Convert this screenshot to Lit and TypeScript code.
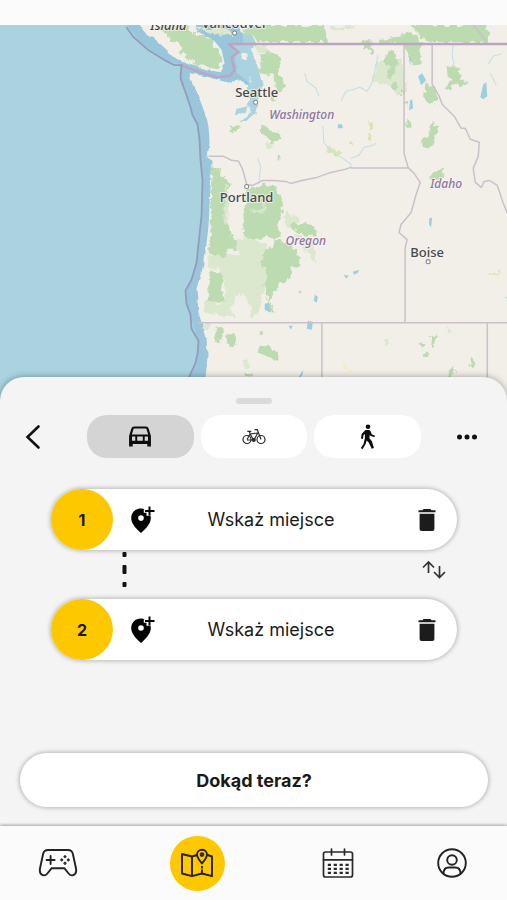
import { LitElement, html, svg, css } from "lit";
import { customElement, property, state } from "lit/decorators.js";

const forests = [
  "M157 28 162 25 186 25 194 33 207 38 215 45 221 58 220 69 207 67 194 62 180 53 182 47 172 40Z",
  "M240 31 258 25 324 25 326 42 256 42 252 36Z",
  "M410 25 486 25 487 42 432 42 420 37Z",
  "M258 55 266 52 277 53 280 64 277 73 284 83 280 92 275 88 274 76 264 74 256 72 262 64Z",
  "M376 39 404 36 406 33 415 35 421 44 418 50 422 66 415 67 408 60 407 53 400 43 378 43Z",
  "M362 40 369 39 371 50 362 49Z", "M386 52 392 50 396 55 395 70 390 80 386 76 388 69 384 64Z",
  "M445 66 459 67 461 80 467 82 459 86 452 84 449 91 443 90 450 82Z",
  "M424 84 433 87 436 92 436 100 430 103 423 99Z",
  "M430 123 437 126 434 139 432 147 422 147 419 138 428 136Z",
  "M430 172 442 169 443 177 433 180 428 177Z",
  "M260 124 267 126 270 131 278 133 280 140 271 144 266 137 259 131Z",
  "M229 126 237 125 236 132 231 133Z",
  "M211 166 218 166 221 175 229 181 228 198 226 214 230 235 236 240 236 250 228 247 225 257 214 254 207 252 210 228Z",
  "M246 190 262 184 276 186 281 198 281 215 277 225 280 235 274 240 265 234 261 239 245 237 242 223 244 208Z",
  "M276 240 290 243 299 257 298 265 291 267 290 276 276 286 269 302 275 311 269 310 264 285 266 268 260 262 265 250Z",
  "M291 222 298 224 304 222 316 229 315 236 304 235 294 232Z",
  "M209 270 221 271 221 289 224 302 207 302Z",
  "M217 325 222 329 218 342 214 342Z", "M227 334 234 335 237 344 230 347 225 342Z",
  "M260 346 267 344 269 349 276 351 277 358 268 356 259 353Z",
  "M417 342 420 341 424 345 421 347Z", "M430 347 431 335 435 333 434 343 433 349Z",
  "M470 355 473 357 473 368 469 366Z", "M446 377 447 369 453 365 454 372Z",
];

const scrub = [
  "M208 256 226 252 240 256 250 264 260 270 263 288 260 310 250 318 250 302 242 292 233 296 230 310 236 318 218 315 204 312 204 300 220 304 225 290 220 268 208 268Z",
  "M228 240 246 236 268 244 262 262 244 260Z", "M240 262 264 250 266 285 258 290Z",
  "M284 210 300 220 292 228 284 226Z", "M292 234 308 238 316 250 314 262 304 248Z",
  "M376 62 384 58 400 58 406 90 396 96 392 84 372 82Z",
];

const lakes = [
  "M417 76 421 73 425 80 420 85 418 79Z", "M482 84 485 82 486 96 482 99 479 97Z",
  "M337 124 341 124 342 128 337 128Z", "M428 218 431 217 430 227 428 224Z",
  "M307 320 312 321 311 329 306 328Z", "M314 294 317 296 316 302 313 300Z",
  "M264 303 268 302 270 312 264 309Z", "M343 274 348 275 345 278Z", "M352 271 358 269 357 272 353 274Z",
  "M288 325 292 325 290 329Z", "M409 100 411 99 412 108 408 110Z", "M298 290 301 291 299 293Z",
  "M298 376 302 369 302 373 299 378Z", "M408 58 410 57 409 66Z", "M503 296 507 297 505 298Z",
];

const places = [
  { name: "Island", x: 168, y: 30, size: 13, kind: "region dark" },
  { name: "Vancouver", x: 234, y: 28, size: 13, kind: "city" },
  { name: "Seattle", x: 256, y: 97, size: 13, kind: "city" },
  { name: "Portland", x: 246, y: 202, size: 13, kind: "city" },
  { name: "Boise", x: 426, y: 256, size: 13, kind: "city" },
  { name: "Washington", x: 301, y: 119, size: 12, kind: "region" },
  { name: "Oregon", x: 305, y: 244, size: 12, kind: "region" },
  { name: "Idaho", x: 445, y: 188, size: 12, kind: "region" },
];

const towns = [[234, 33], [255, 102], [246, 186], [427, 261]];

@customElement("route-map")
class RouteMap extends LitElement {
  static styles = css`
    :host { display: block; position: relative; overflow: hidden; background: #aad3df; }
    svg { position: absolute; inset: 0; width: 100%; height: 100%; display: block; }
    text { font-family: "Noto Sans", "Open Sans", sans-serif; font-weight: 500; text-anchor: middle; paint-order: stroke; stroke: #f5f3efcc; stroke-width: 2px; stroke-linejoin: round; }
    .city { fill: #484848; }
    .region { fill: #8f75a2; font-style: italic; }
    .dark { fill: #444; }
    .sea { fill: #aad3df; }
    .land { fill: #f2efe9; }
    .forest { fill: #bddbb0; }
    .scrub { fill: #dbe8ce; }
    .band { fill: #9ac6dc; }
    .line { fill: none; stroke: #cbc0ca; stroke-width: 1.5; stroke-linejoin: round; }
    .country { stroke: #bda4c0; stroke-width: 2.4; }
    .coast { stroke: #939cbd; stroke-width: 1.8; }
    .river { fill: none; stroke: #c3e0e6; stroke-width: 1.1; }
    .town { fill: #fff; stroke: #888; }
  `;
  render() {
    return html`<svg viewBox="0 25 507 375" preserveAspectRatio="xMinYMin slice" role="img" aria-label="Mapa">
      <defs>
        <filter id="rough" x="-10%" y="-10%" width="120%" height="120%">
          <feTurbulence type="fractalNoise" baseFrequency="0.16" numOctaves="3" seed="4"></feTurbulence>
          <feDisplacementMap in="SourceGraphic" scale="8" xChannelSelector="R" yChannelSelector="G"></feDisplacementMap>
        </filter>
        <filter id="gentle"><feTurbulence type="fractalNoise" baseFrequency="0.12" numOctaves="2" seed="9"></feTurbulence>
          <feDisplacementMap in="SourceGraphic" scale="4" xChannelSelector="R" yChannelSelector="G"></feDisplacementMap></filter>
      </defs>
      <rect class="sea" y="25" width="507" height="375"></rect>
      <path class="band" d="M126 25 140 42 165 60 181 65 180 78 190 107 197 128 200 160 202 180 200 230 196 262 188 285 185 295 190 315 196 335 198 345 196 362 188 380 215 390 230 200 250 80 240 25Z"></path>
      <g filter="url(#gentle)">
        <path class="land" d="M136 20 145 33 160 44 175 58 190 64 205 69 219 72 224 63 221 50 213 40 198 32 193 20Z"></path>
        <path class="land" d="M236 15 240 32 252 36 256 44 250 50 254 58 258 70 262 86 257 100 246 97 249 87 240 80 226 82 205 76 189 73 192 84 198 96 204 112 208 126 209 142 207 157 211 162 210 185 208 225 204 260 196 288 198 312 206 338 207 355 202 410 520 410 520 15Z"></path>
      </g>
      <g filter="url(#rough)">
        ${scrub.map((d) => svg`<path class="scrub" d=${d}></path>`)}
        ${forests.map((d) => svg`<path class="forest" d=${d}></path>`)}
        <path class="forest" d="M270 95h4v6h-4zM390 82h5v6h-5zM400 90h4v5h-4zM403 101h4v4h-4zM405 121h4v5h-4zM253 112h3v3h-3zM275 156h4v3h-4zM258 330h4v4h-4zM245 372h7v4h-7zM423 352h4v4h-4zM368 50h3v4h-3z"></path>
        <path class="scrub" d="M384 338h4v6h-4zM446 326h4v6h-4zM243 360h4v6h-4zM204 322h6v5h-6zM224 184h3v40h-3zM250 210h14v2h-14zM262 194h2v16h-2z"></path>
        <path fill="#dce3ad" d="M326 145 333 149 341 152 338 155 327 151ZM368 122h3v8h-3zM367 133h3v7h-3zM349 141h3v3h-3zM488 273l10-2-3 3h-8z"></path>
        <path fill="#f7ecca" d="M342 362h6v7h-6z"></path>
        <path class="scrub" d="M194 28 207 33 232 36 228 28ZM330 26h22v3h-22zM250 44l14 2 6 6h-12zM264 142l10 3-6 4z"></path>
      </g>
      <path class="sea" filter="url(#gentle)" d="M234 46 244 42 250 55 250 68 256 76 258 90 253 97 258 105 252 114 247 121 240 122 247 115 250 108 241 113 234 115 236 109 246 106 250 98 246 90 247 81 236 72 235 60Z"></path>
      <path class="land" filter="url(#gentle)" d="M241 54h5v6h-5zM249 75l3 7h-3zM246 107h3v5h-3z"></path>
      ${lakes.map((d) => svg`<path fill="#9bd0df" d=${d}></path>`)}
      <path class="river" d="M304 73 306 81 315 88 318 96 M340 101 345 91 353 89 359 87 366 91 371 83 374 70 377 55 M322 126 323 142 330 151 342 158 350 164 350 168 M350 158 358 155 363 147 372 145 375 143 M452 43 451 56 453 64 M487 64 492 56 500 54 M489 73 495 85 M258 184 260 166 257 158"></path>
      <path class="line" d="M403 44V153L407 167 413 173 419 182 415 194 410 212 400 224 398 232 406 239 404 248V322M197 322H507M321 322V380M486 322V380M350 167.500H407M431 44V84L438 96 441 104 453 116 460 128 464 128 469 139 478 142 477 156 472 168 474 182 480 187 483 181 488 180 496 185 502 203 507 215M472 25 485 41"></path>
      <path class="line" d="M208 156 223 156 231 160 238 161 242 169 246 184 252 185 262 180 273 180 285 181 290 183 301 180 316 177 330 172 344 169 350 167"></path>
      <path class="line country" d="M507 44H228L238 52 231 57 234 70 229 76 216 77 199 72 181 65"></path>
      <path class="line coast" d="M126 27 133 37 148 50 164 60 174 65 181 65 180 78 186 95 190 107 192 115 197 124 199 139 200 160 202 180 201 215 196 262 191 279 185 290 186 303 190 314 191 328 198 340 197 353 195 362 187 380"></path>
      ${towns.map(([x, y]) => svg`<circle class="town" cx=${x} cy=${y} r="2"></circle>`)}
      ${places.map((p) => svg`<text class=${p.kind} x=${p.x} y=${p.y} font-size=${p.size}>${p.name}</text>`)}
    </svg>`;
  }
}

const pinPlus = html`<svg width="26" height="28" viewBox="0 0 26 28" aria-hidden="true">
  <path fill="#050505" fill-rule="evenodd" d="M15 3.200A10.200 10.200 0 0 0 11 2.400C5.200 2.400 1.200 6.600 1.200 12c0 5 3.600 9.600 9.800 15 6.200-5.400 9.800-10 9.800-15 0-.8-.1-1.500-.2-2.200H16.500V6.700H13.800V3.200ZM11 9.200a2.800 2.800 0 1 1 0 5.600 2.800 2.800 0 0 1 0-5.600Z"/>
  <path stroke="#050505" stroke-width="2" fill="none" d="M19.500 .5v9M15 5h9.500"/></svg>`;

const trash = html`<svg width="20" height="24" viewBox="0 0 20 24" aria-hidden="true">
  <path fill="#1c1c1c" d="M6.500 1h7l1 1.200h4v2h-17v-2h4zM2.600 5.800h14.800V21a2 2 0 0 1-2 2H4.600a2 2 0 0 1-2-2z"/></svg>`;

@customElement("place-field")
class PlaceField extends LitElement {
  @property({ type: Number }) number = 1;
  static styles = css`
    :host { display: grid; grid-template-columns: 62px 60px 1fr 60px; height: 61px; border-radius: 31px; background: #fff; box-shadow: 0 0 4px 1px #00000040; }
    .badge { display: grid; place-items: center; background: #fdc800; border-radius: 50%; font-size: 16px; font-weight: 700; }
    button { display: grid; place-items: center; padding: 0; border: 0; background: none; }
    input { min-width: 0; width: 100%; box-sizing: border-box; padding: 0 28px 0 0; border: 0; outline: 0; background: none; text-align: center; font: inherit; font-size: 18px; color: #1a1a1a; }
    input::placeholder { color: #1a1a1a; opacity: 1; }
  `;
  render() {
    return html`<label class="badge" for="place">${this.number}</label>
      <button aria-label="Wybierz na mapie">${pinPlus}</button>
      <input id="place" type="text" placeholder="Wskaż miejsce" />
      <button aria-label="Usuń">${trash}</button>`;
  }
}

const car = html`<svg width="24" height="24" viewBox="0 0 24 24" aria-hidden="true">
  <path fill="none" stroke="#0c0c0c" stroke-width="2.200" stroke-linejoin="round" d="M2.200 11 4.600 3.400Q4.900 2.500 6 2.500H18Q19.100 2.500 19.400 3.400L21.800 11V18H2.200zM2.200 10.500H21.800"/>
  <path fill="#0c0c0c" d="M1.100 17h3.600v4.500H1.100zM19.300 17h3.600v4.500h-3.600zM7.300 11h1.900v6H7.300zM14.800 11h1.900v6h-1.900zM2 15.800h20v3H2zM2 11h2v6H2zM20 11h2v6h-2z"/></svg>`;

const bike = html`<svg width="24" height="18" viewBox="0 0 24 18" fill="none" stroke="#2a2a2a" stroke-width="1.200" stroke-linejoin="round" aria-hidden="true">
  <circle cx="5" cy="11.500" r="4"/><circle cx="19" cy="11.500" r="4"/>
  <path d="M5 11.500 8.200 6 11.500 12H5M8.200 6l7.500-1L12 12M19 11.500 15.300 1.700h-2.800M8.200 6 7.300 3.300M5.300 3.300h4"/><circle cx="11.800" cy="12" r="1.400" fill="#2a2a2a"/></svg>`;

const walk = html`<svg width="16" height="28" viewBox="0 0 16 28" aria-hidden="true"><circle cx="8" cy="3.700" r="2.300" fill="#0c0c0c"/>
  <path fill="#0c0c0c" d="M5.500 7H9.200l1.300 1 1.200 3.200 3.300 1.500-.7 1.600-4-1.500-.5-1-.4 3.400 2.500 3L13.900 25l-2.100.8-3.100-6.400-2-1.800-1.300 4L2.500 26.200.9 24.900l2.600-4L4.800 15.500 5 11 3.500 12.300 2.900 16 1 15.600l.6-4.500z"/></svg>`;

const gamepad = html`<svg width="40" height="30" viewBox="0 0 40 30" fill="none" stroke="#222" stroke-width="1.900" stroke-linecap="round" stroke-linejoin="round" aria-hidden="true">
  <path d="M10 2h20c2.800 0 4.300 1.300 4.900 4l3 14c.7 3.400-.2 6.400-2.700 7.200-1.900.6-3.400-.2-4.600-1.700l-4.300-5.300H13.700l-4.300 5.300c-1.200 1.500-2.700 2.300-4.600 1.700-2.500-.8-3.400-3.800-2.700-7.200l3-14C5.700 3.300 7.200 2 10 2Z"/>
  <path d="M12.600 8v8M8.600 12h8"/>
  <path stroke-width="1.300" d="M27 7.600l1 1-1 1-1-1zM27 14.200l1 1-1 1-1-1zM23.700 10.900l1 1-1 1-1-1zM30.300 10.900l1 1-1 1-1-1z"/></svg>`;

const mapIcon = html`<svg width="34" height="30" viewBox="0 0 34 30" fill="none" stroke="#2a2100" stroke-width="1.900" stroke-linejoin="round" aria-hidden="true">
  <path d="M17 7 12 8.500 2 6V25.500l10 2.700 10-2.700 10 2.700V8.500L27.500 7M12 8.500v19.500M22 18v2.500M22 21.500v4"/>
  <path d="M22 15.500c-3.200-4-5-6.500-5-8.800a5 5 0 0 1 10 0c0 2.300-1.800 4.800-5 8.800Z"/><circle cx="22" cy="6.600" r="1.400"/></svg>`;

const calendar = html`<svg width="32" height="32" viewBox="0 0 32 32" fill="none" stroke="#2a2a2a" stroke-width="1.700" stroke-linecap="round" aria-hidden="true">
  <rect x="1.500" y="5" width="29" height="25" rx="2"/><path d="M1.500 12.800h29M9.500 2v6M22.500 2v6"/>
  <path stroke-width="2.200" stroke-linecap="butt" stroke-dasharray="3.200 2.700" d="M5.800 17.800h21M5.800 21.800h21M5.800 25.800h21"/></svg>`;

const person = html`<svg width="32" height="32" viewBox="0 0 32 32" fill="none" stroke="#222" stroke-width="1.900" aria-hidden="true">
  <circle cx="16" cy="16" r="13.800"/><circle cx="16" cy="13" r="4.800"/><path d="M7.500 27c0-4 2-6.500 5-6.500h7c3 0 5 2.500 5 6.500"/></svg>`;

@customElement("app-root")
class AppRoot extends LitElement {
  @state() mode = 0;
  static styles = css`
    :host { display: flex; flex-direction: column; min-height: 100vh; background: #f4f4f4; color: #1a1a1a; font-family: Inter, "Open Sans", sans-serif; }
    button { padding: 0; border: 0; background: none; font: inherit; color: inherit; display: grid; place-items: center; }
    svg { display: block; }
    .status { height: 25px; background: #fbfbfb; }
    route-map { flex: 1; min-height: 240px; }
    .sheet { position: relative; display: flex; flex-direction: column; margin-top: -24px; padding: 21px 0 19px; border-radius: 24px 24px 0 0; background: #f4f4f4; box-shadow: 0 0 7px #00000059; }
    .handle { width: 36px; height: 6px; margin: 0 auto 11px; border-radius: 3px; background: #dadada; }
    .modes { display: grid; grid-template-columns: 80px repeat(3, 1fr) 79px; column-gap: 7px; height: 43px; }
    .back { width: 66px; }
    .mode { border-radius: 20px; background: #fff; }
    .mode.active { background: #d4d4d4; }
    .stops { margin: 31px 50px 0 51px; }
    .between { display: flex; justify-content: space-between; align-items: center; height: 49px; padding: 0 10px 0 71px; }
    .swap { width: 26px; height: 40px; }
    .where { margin: 93px 19px 0 20px; height: 54px; border-radius: 27px; background: #fff; font-size: 18px; font-weight: 700; box-shadow: 0 0 4px 1px #00000040; }
    nav { position: relative; display: grid; grid-template-columns: 115fr 164fr 118fr 110fr; height: 74px; background: #fbfbfb; box-shadow: 0 -1px 3px #00000059; }
    nav a { display: grid; place-items: center; }
    .disc { display: grid; place-items: center; width: 55px; height: 55px; border-radius: 50%; background: #fdc800; }
  `;
  render() {
    const modes = [["Samochód", car], ["Rower", bike], ["Pieszo", walk]];
    return html`<div class="status"></div>
      <route-map></route-map>
      <main class="sheet">
        <div class="handle"></div>
        <div class="modes">
          <button class="back" aria-label="Wstecz"><svg width="16" height="26" viewBox="0 0 16 26" fill="none" stroke="#111" stroke-width="2.600" stroke-linecap="round"><path d="M13.500 2.500 2.500 13l11 10.500"/></svg></button>
          ${modes.map(([label, icon], i) => html`<button class="mode ${i === this.mode ? "active" : ""}" aria-label=${label} @click=${() => (this.mode = i)}>${icon}</button>`)}
          <button aria-label="Więcej"><svg width="22" height="6" viewBox="0 0 22 6" fill="#111"><circle cx="3.500" cy="3" r="2.500"/><circle cx="11" cy="3" r="2.500"/><circle cx="18.500" cy="3" r="2.500"/></svg></button>
        </div>
        <div class="stops">
          <place-field .number=${1}></place-field>
          <div class="between">
            <svg width="5" height="49" viewBox="0 0 5 49" fill="#111" aria-hidden="true"><rect x=".5" y="2" width="4" height="5" rx="1"/><rect x=".5" y="15" width="4" height="9" rx="1"/><rect x=".5" y="32" width="4" height="5" rx="1"/></svg>
            <button class="swap" aria-label="Zamień kolejność"><svg width="26" height="36" viewBox="0 0 26 36" fill="none" stroke="#333" stroke-width="1.700"><path d="M7.500 16V5M2 10.500 7.500 5 13 10.500M18.500 9v11M13 15l5.500 5.500L24 15"/></svg></button>
          </div>
          <place-field .number=${2}></place-field>
        </div>
        <button class="where">Dokąd teraz?</button>
      </main>
      <nav>
        <a href="#gry" aria-label="Gry">${gamepad}</a>
        <a href="#mapa" aria-label="Mapa"><span class="disc">${mapIcon}</span></a>
        <a href="#kalendarz" aria-label="Kalendarz">${calendar}</a>
        <a href="#profil" aria-label="Profil">${person}</a>
      </nav>`;
  }
}
